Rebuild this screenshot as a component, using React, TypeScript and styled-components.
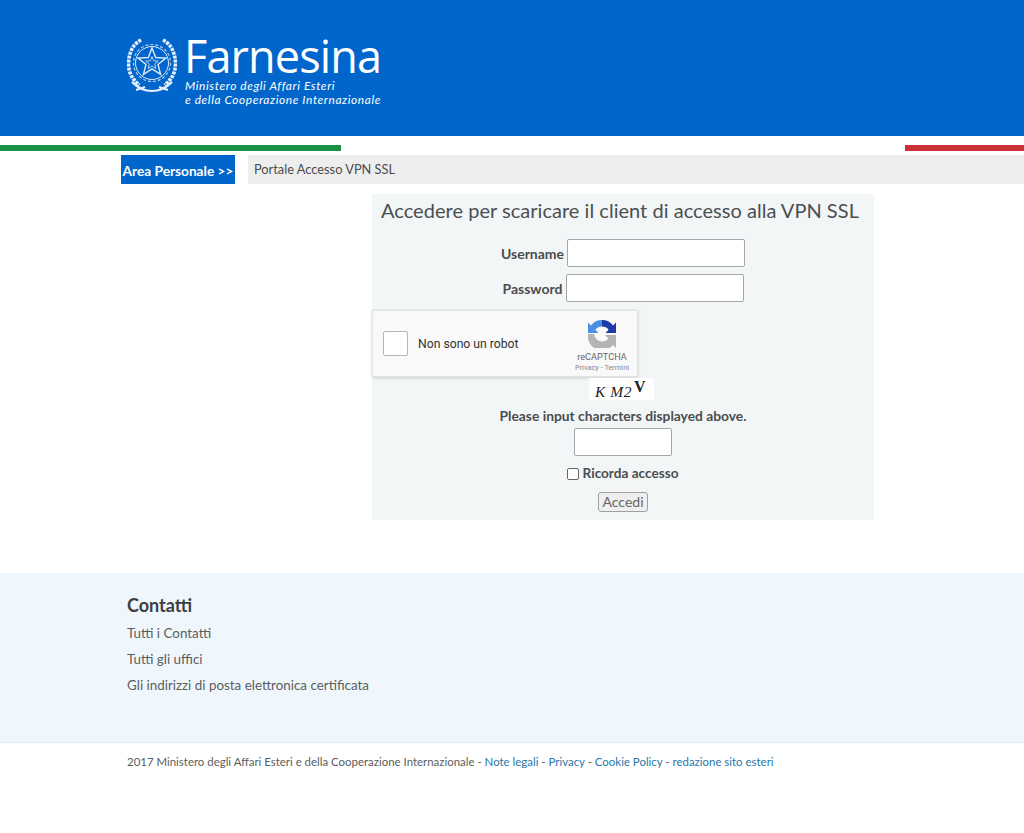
import React from 'react';
import styled, { createGlobalStyle } from 'styled-components';

const GlobalStyle = createGlobalStyle`
    html, body {
        margin: 0;
        padding: 0;
        background: #fff;
        font-family: 'Lato', 'Noto Sans', sans-serif;
        color: #4a4d50;
    }
`;

const Page = styled.div`
    width: 1024px;
    height: 833px;
    overflow: hidden;
`;

const Header = styled.header`
    height: 136px;
    background: #0066cc;
    padding: 32px 0 0 127px;
    box-sizing: border-box;
    display: flex;
    gap: 7px;
    color: #fff;
`;

const EmblemSlot = styled.div`
    margin-top: 5px;
    line-height: 0;
`;

const Brand = styled.div`
    display: flex;
    flex-direction: column;
`;

const BrandName = styled.div`
    font-family: 'Open Sans', sans-serif;
    font-weight: 400;
    font-size: 45px;
    line-height: 47px;
    letter-spacing: -0.85px;
`;

const BrandSub = styled.div`
    font-family: 'Lato', sans-serif;
    font-style: italic;
    font-size: 11.9px;
    line-height: 14px;
    letter-spacing: 0.6px;
    margin-left: 1px;
`;

const Stripe = styled.div`
    margin-top: 9px;
    height: 6px;
    display: flex;
`;

const StripePart = styled.div<{ $w: number; $c: string }>`
    width: ${p => p.$w}px;
    background: ${p => p.$c};
`;

const Crumbs = styled.nav`
    margin-top: 4px;
    height: 29px;
    padding-left: 121px;
    display: flex;
    gap: 13px;
`;

const AreaTag = styled.div`
    width: 114px;
    background: #0066cc;
    color: #fff;
    font-weight: 700;
    font-size: 13.7px;
    line-height: 31px;
    text-align: center;
    white-space: nowrap;
`;

const CrumbBar = styled.div`
    flex: 1;
    background: #eeeeee;
    padding-left: 6px;
    font-size: 12.8px;
    line-height: 29px;
    color: #4a4d50;
`;

const Panel = styled.form`
    width: 502px;
    height: 326px;
    margin: 10px 0 0 372px;
    background: #f3f6f7;
    display: flex;
    flex-direction: column;
    align-items: center;
`;

const Title = styled.h1`
    align-self: flex-start;
    margin: 0;
    padding: 3px 0 0 9px;
    font-weight: 400;
    font-size: 20px;
    line-height: 26px;
    letter-spacing: 0.03px;
    color: #4a4f52;
    white-space: nowrap;
`;

const FieldRow = styled.label<{ $top: number }>`
    margin-top: ${p => p.$top}px;
    display: flex;
    align-items: center;
    gap: 3px;
    font-weight: 700;
    font-size: 14px;
    color: #4a4d50;
`;

const TextBox = styled.input<{ $w: number; $top?: number }>`
    width: ${p => p.$w}px;
    height: 28px;
    box-sizing: border-box;
    border: 1px solid #a3a6a8;
    border-radius: 2px;
    background: #fff;
    margin: ${p => p.$top ?? 0}px 0 0;
    padding: 0;
`;

const Recaptcha = styled.div`
    align-self: flex-start;
    margin-top: 8px;
    width: 266px;
    height: 67px;
    box-sizing: border-box;
    background: #f9f9f9;
    border: 1px solid #e2e2e2;
    box-shadow: 0 1px 3px rgba(0, 0, 0, 0.16);
    padding: 0 7px 0 10px;
    display: flex;
    align-items: center;
    gap: 10px;
`;

const RobotBox = styled.div`
    width: 25px;
    height: 25px;
    box-sizing: border-box;
    background: #fff;
    border: 1px solid #b5b5b5;
    border-radius: 2px;
`;

const RobotLabel = styled.span`
    flex: 1;
    font-family: 'Roboto', sans-serif;
    font-size: 12.2px;
    color: #333;
`;

const RecaptchaBrand = styled.div`
    width: 56px;
    display: flex;
    flex-direction: column;
    align-items: center;
    font-family: 'Roboto', sans-serif;
    color: #777;
    padding-top: 6px;
`;

const RecaptchaName = styled.span`
    font-size: 9.2px;
    line-height: 11px;
    margin-top: 3px;
    color: #666;
`;

const RecaptchaLinks = styled.span`
    font-size: 7.4px;
    line-height: 11px;
    white-space: nowrap;
    color: #888;
`;

const CaptchaImage = styled.div`
    width: 65px;
    height: 22px;
    margin: 1px 0 0 -3px;
    background: #fff;
    padding-left: 6px;
    box-sizing: border-box;
    font-family: 'Liberation Serif', serif;
    color: #222;
    display: flex;
    gap: 2px;
    white-space: nowrap;
`;

const CaptchaWarped = styled.span`
    font-style: italic;
    font-size: 15.5px;
    line-height: 27px;
    letter-spacing: 0.5px;
`;

const CaptchaRaised = styled.span`
    font-weight: 700;
    font-size: 16px;
    line-height: 18px;
`;

const Prompt = styled.div`
    margin-top: 7px;
    font-weight: 700;
    font-size: 13.8px;
    line-height: 17px;
    color: #4a4d50;
`;

const Remember = styled.label`
    margin-top: 9px;
    margin-left: -1px;
    display: flex;
    align-items: center;
    gap: 4px;
    font-weight: 700;
    font-size: 13.6px;
    line-height: 17px;
    color: #4a4d50;
`;

const RememberBox = styled.span`
    width: 12px;
    height: 12px;
    box-sizing: border-box;
    background: #fff;
    border: 1px solid #666;
    border-radius: 2px;
`;

const SubmitButton = styled.button`
    margin-top: 10px;
    width: 50px;
    height: 20px;
    padding: 0;
    box-sizing: border-box;
    border: 1px solid #a0a0a0;
    border-radius: 3px;
    background: #efefef;
    color: #666;
    font-family: inherit;
    font-size: 14px;
    line-height: 18px;
`;

const Contacts = styled.section`
    margin-top: 53px;
    height: 170px;
    background: #f0f7fc;
    box-sizing: border-box;
    padding: 21px 0 0 127px;
    border-bottom: 1px solid #e1e8ee;
`;

const ContactsTitle = styled.h2`
    margin: 0 0 4px;
    font-size: 18px;
    line-height: 22px;
    font-weight: 700;
    color: #3c4043;
`;

const ContactLink = styled.a`
    display: block;
    font-size: 13.4px;
    line-height: 26px;
    color: #5a5d60;
`;

const Legal = styled.footer`
    padding: 11px 0 0 127px;
    font-size: 11.45px;
    line-height: 16px;
    color: #5a5d60;
    white-space: nowrap;
`;

const LegalLink = styled.a`
    color: #2a76a8;
`;

const Emblem = () => (
    <svg width="50" height="56" viewBox="0 0 50 56" fill="none" stroke="#dfeafa">
        <circle cx="25" cy="26" r="16.500" strokeWidth="1" />
        <circle cx="25" cy="26" r="18.500" strokeDasharray="3 2" strokeWidth="1.200" opacity="0.8" />
        <path d="M25 11l3.700 9.500 10.200.6-7.900 6.400 2.600 9.900-8.600-5.500-8.600 5.500 2.600-9.900-7.900-6.400 10.200-.6z" strokeWidth="1.400" />
        <path d="M25 19.500l1.700 4.300 4.600.3-3.600 2.900 1.200 4.500-3.900-2.500-3.900 2.500 1.200-4.500-3.600-2.900 4.600-.3z" strokeWidth=".8" />
        <path
            d="M14 3C6 7 1.800 16 1.500 26c-.3 9 4 17 11 22M36 3c8 4 12.200 13 12.500 23 .3 9-4 17-11 22"
            stroke="#e8f1fb"
            strokeWidth="3.600"
            strokeDasharray="3 1"
        />
        <path d="M5 45c6 6 14 9 20 9s14-3 20-9M9 53l9-3M41 53l-9-3" stroke="#e8f1fb" strokeWidth="2.200" />
    </svg>
);

const RecaptchaIcon = () => (
    <svg width="28" height="28" viewBox="0 0 28 28">
        <path d="M14 0A14 14 0 0 0 3 5.400L0 2.500V13h10.500L7.300 9.800A8.500 8.500 0 0 1 14 6.500z" fill="#4a90e2" />
        <path d="M14 0a14 14 0 0 1 11 5.400L28 2.500V13H17.500l3.200-3.200A8.500 8.500 0 0 0 14 6.500z" fill="#1c3aa9" />
        <path d="M0 14h6.200A8 8 0 0 0 14 21.500c2.700 0 4.800-1.100 6.300-2.900L17 15h11v13l-3.200-3.100A14 14 0 0 1 0 14z" fill="#b4b4b4" />
    </svg>
);

const App = () => (
    <Page>
        <GlobalStyle />
        <Header>
            <EmblemSlot>
                <Emblem />
            </EmblemSlot>
            <Brand>
                <BrandName>Farnesina</BrandName>
                <BrandSub>
                    Ministero degli Affari Esteri
                    <br />e della Cooperazione Internazionale
                </BrandSub>
            </Brand>
        </Header>
        <Stripe>
            <StripePart $w={341} $c="#1b9146" />
            <StripePart $w={564} $c="#ffffff" />
            <StripePart $w={119} $c="#cb3235" />
        </Stripe>
        <Crumbs>
            <AreaTag>Area Personale &gt;&gt;</AreaTag>
            <CrumbBar>Portale Accesso VPN SSL</CrumbBar>
        </Crumbs>
        <Panel onSubmit={e => e.preventDefault()}>
            <Title>Accedere per scaricare il client di accesso alla VPN SSL</Title>
            <FieldRow $top={16}>
                Username
                <TextBox $w={178} />
            </FieldRow>
            <FieldRow $top={7}>
                Password
                <TextBox $w={178} type="password" />
            </FieldRow>
            <Recaptcha>
                <RobotBox />
                <RobotLabel>Non sono un robot</RobotLabel>
                <RecaptchaBrand>
                    <RecaptchaIcon />
                    <RecaptchaName>reCAPTCHA</RecaptchaName>
                    <RecaptchaLinks>Privacy - Termini</RecaptchaLinks>
                </RecaptchaBrand>
            </Recaptcha>
            <CaptchaImage>
                <CaptchaWarped>K M2</CaptchaWarped>
                <CaptchaRaised>V</CaptchaRaised>
            </CaptchaImage>
            <Prompt>Please input characters displayed above.</Prompt>
            <TextBox $w={98} $top={4} />
            <Remember>
                <RememberBox />
                Ricorda accesso
            </Remember>
            <SubmitButton>Accedi</SubmitButton>
        </Panel>
        <Contacts>
            <ContactsTitle>Contatti</ContactsTitle>
            <ContactLink>Tutti i Contatti</ContactLink>
            <ContactLink>Tutti gli uffici</ContactLink>
            <ContactLink>Gli indirizzi di posta elettronica certificata</ContactLink>
        </Contacts>
        <Legal>
            2017 Ministero degli Affari Esteri e della Cooperazione Internazionale - <LegalLink>Note legali</LegalLink> - <LegalLink>Privacy</LegalLink> - <LegalLink>Cookie Policy</LegalLink> - <LegalLink>redazione sito esteri</LegalLink>
        </Legal>
    </Page>
);

export default App;
